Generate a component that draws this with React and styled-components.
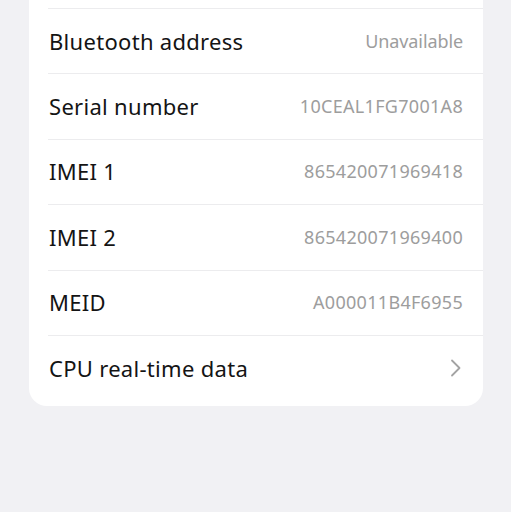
import React from "react";
import styled, { createGlobalStyle } from "styled-components";

const Global = createGlobalStyle`
  html, body { margin: 0; padding: 0; background: #f1f1f4; }
  body { font-family: "Noto Sans", "Open Sans", sans-serif; overflow: hidden; }
`;

const Page = styled.div`
  height: 512px;
  padding: 0 28px 0 29px;
  box-sizing: border-box;
  background: #f1f1f4;
`;

const Card = styled.div`
  background: #ffffff;
  border-radius: 0 0 18px 18px;
  margin-top: -57.4px;
  padding-bottom: 6px;
`;

const Row = styled.div`
  height: 65.4px;
  box-sizing: border-box;
  display: flex;
  align-items: center;
  justify-content: space-between;
  padding: 0 20px 0 20px;
  position: relative;
  ${(p) =>
    p.$divider &&
    `
    &::before {
      content: "";
      position: absolute;
      top: 0;
      left: 19px;
      right: 0;
      height: 1px;
      background: #ececee;
    }
  `}
`;

const Label = styled.span`
  font-size: 22px;
  color: #141414;
  letter-spacing: 0.3px;
`;

const Value = styled.span`
  font-size: 18px;
  color: #9d9d9d;
  letter-spacing: ${(p) => (p.$digits ? "0.3px" : "-0.1px")};
`;

const Chevron = styled.svg`
  width: 12px;
  height: 18px;
  margin-right: 1px;
`;

const rows = [
  ["", ""],
  ["Bluetooth address", "Unavailable"],
  ["Serial number", "10CEAL1FG7001A8"],
  ["IMEI 1", "865420071969418"],
  ["IMEI 2", "865420071969400"],
  ["MEID", "A000011B4F6955"],
];

export default function App() {
  return (
    <>
      <Global />
      <Page>
        <Card>
          {rows.map(([l, v], i) => (
            <Row key={i} $divider={i > 0}>
              <Label>{l}</Label>
              <Value $digits={/\d/.test(v)}>{v}</Value>
            </Row>
          ))}
          <Row $divider>
            <Label>CPU real-time data</Label>
            <Chevron viewBox="0 0 12 18">
              <path d="M2 1.5 L9.5 9 L2 16.5" fill="none" stroke="#a3a3a3" strokeWidth="1.8" strokeLinecap="round" strokeLinejoin="round" />
            </Chevron>
          </Row>
        </Card>
      </Page>
    </>
  );
}
